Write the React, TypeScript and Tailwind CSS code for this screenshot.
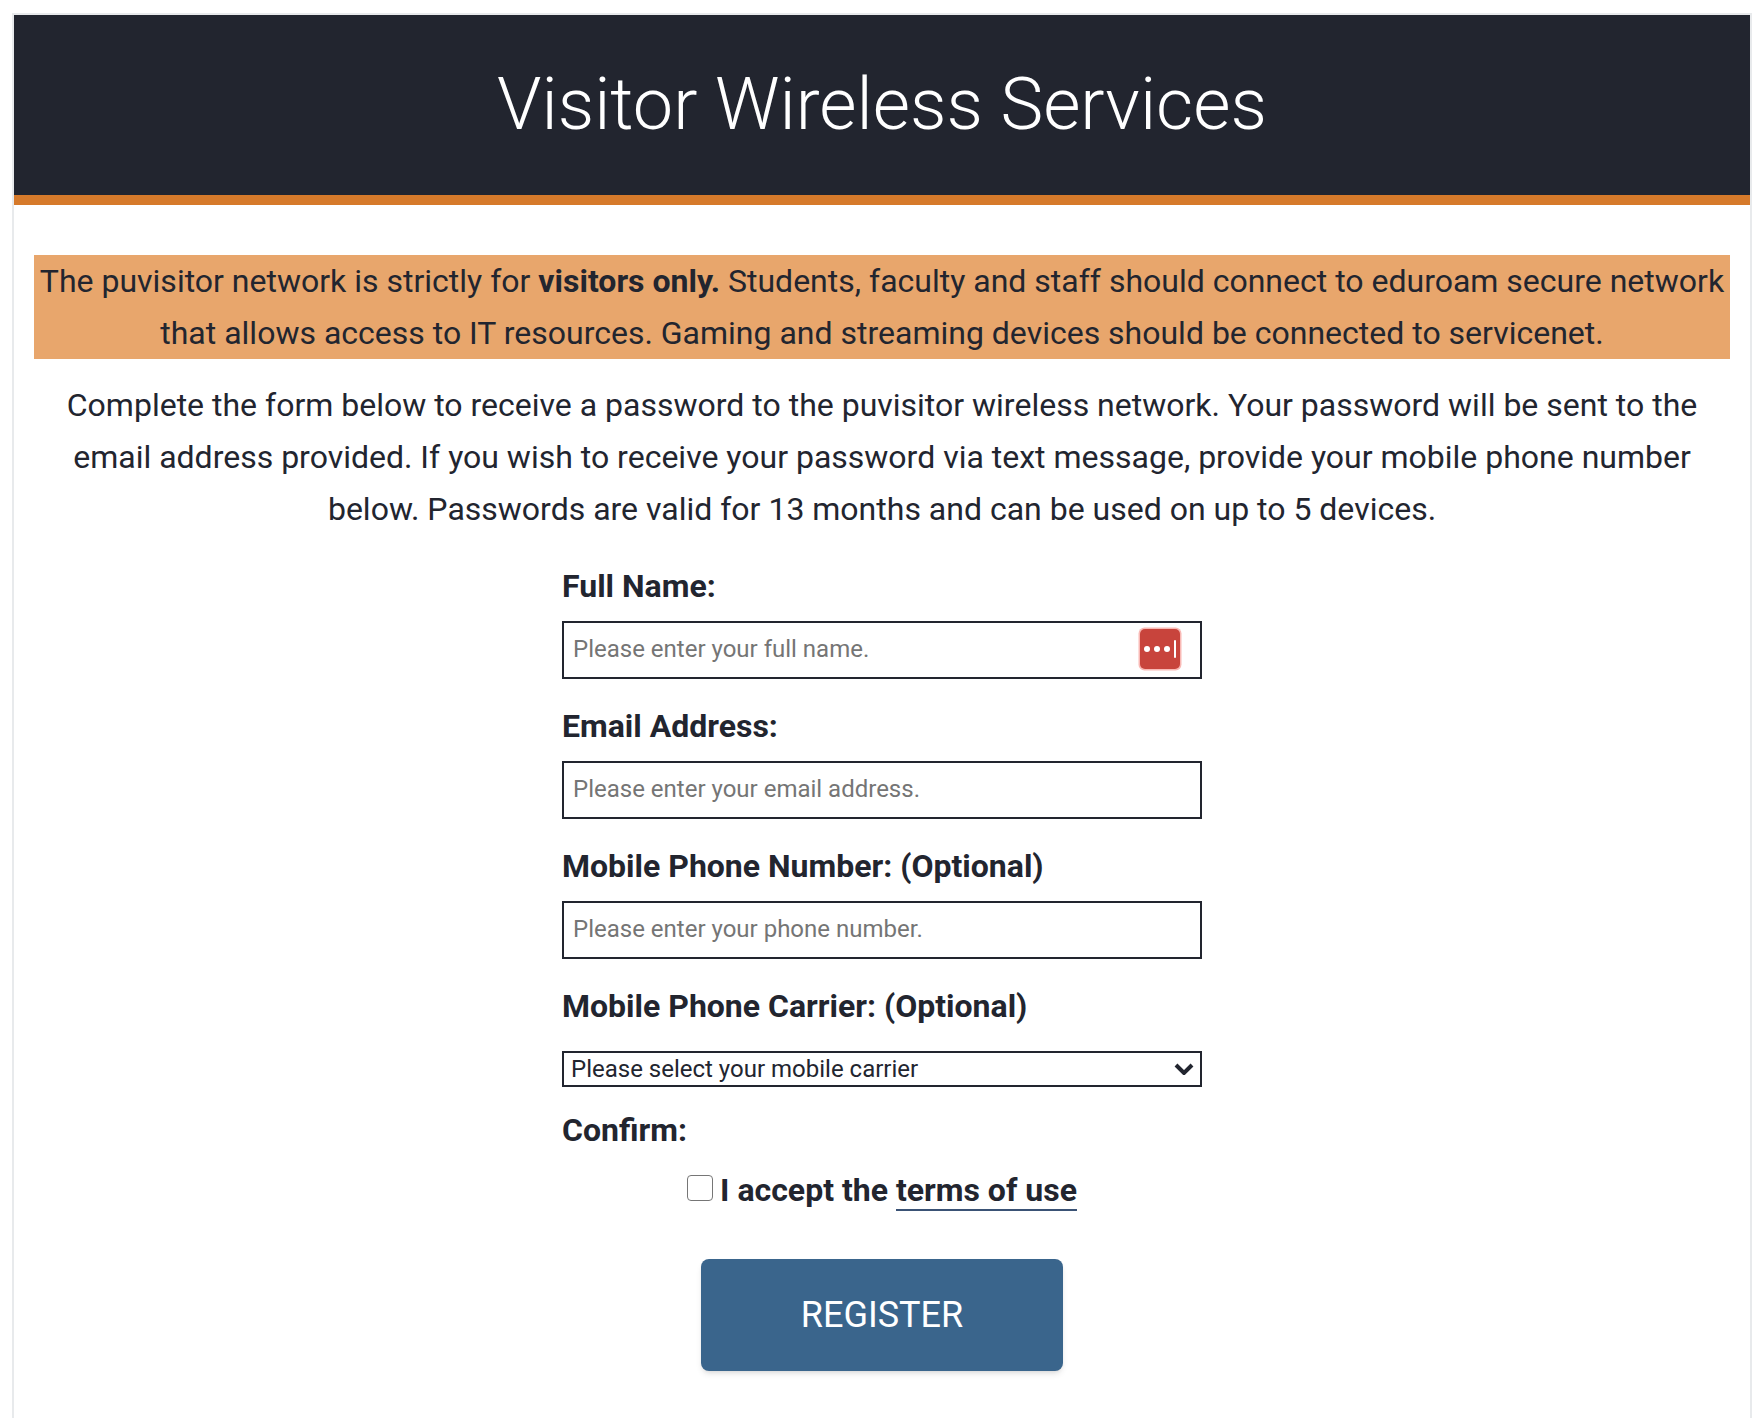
import { useState } from "react";
import type { InputHTMLAttributes, ReactNode } from "react";

const CARRIERS = ["AT&T", "Sprint", "T-Mobile", "Verizon"];

function Label({ htmlFor, children }: { htmlFor: string; children: ReactNode }) {
  return (
    <label htmlFor={htmlFor} className="block text-[32px] leading-[52px] font-bold">
      {children}
    </label>
  );
}

function TextField({
  id,
  label,
  icon,
  ...props
}: { id: string; label: string; icon?: ReactNode } & InputHTMLAttributes<HTMLInputElement>) {
  return (
    <div>
      <Label htmlFor={id}>{label}</Label>
      <div className="relative mt-[9px]">
        <input
          id={id}
          className="block h-[58px] w-full border-2 border-[#22252f] bg-white px-[9px] pb-[2px] text-2xl outline-none placeholder:text-[#757575] focus:border-[#3a658c]"
          {...props}
        />
        {icon}
      </div>
    </div>
  );
}

/** Password manager badge that sits inside the field. */
function FillBadge() {
  return (
    <button
      type="button"
      aria-label="Fill from password manager"
      className="absolute inset-y-0 right-5 flex cursor-pointer items-center pb-[2px]"
    >
      <svg width="44" height="44" viewBox="0 0 44 44" aria-hidden="true">
        <rect x="0.5" y="0.5" width="43" height="43" rx="6" fill="#f9b9b5" />
        <rect x="2" y="2" width="40" height="40" rx="5" fill="#c8443c" />
        <circle cx="9" cy="22" r="3" fill="#fff" />
        <circle cx="19" cy="22" r="3" fill="#fff" />
        <circle cx="29" cy="22" r="3" fill="#fff" />
        <rect x="36" y="13" width="2" height="18" rx="1" fill="#fff" />
      </svg>
    </button>
  );
}

export default function App() {
  const [accepted, setAccepted] = useState(false);

  return (
    <div className="min-h-screen bg-white pt-[13px] pr-1 pl-3 font-[Roboto,sans-serif] text-[#22252f]">
      <main className="min-h-[1405px] border-2 border-b-0 border-[#e8eaec]">
        <header className="border-b-[10px] border-[#d67a2b] bg-[#22252f] py-[45px] text-center">
          <h1 className="text-[72px] leading-[90px] font-light text-white">
            Visitor Wireless Services
          </h1>
        </header>

        <div className="px-5 pt-[50px] pb-12 text-center text-[32px] leading-[52px]">
          <p className="bg-[#e8a66c]">
            The puvisitor network is strictly for <strong>visitors only.</strong> Students, faculty
            and staff should connect to eduroam secure network that allows access to IT resources.
            Gaming and streaming devices should be connected to servicenet.
          </p>
          <p className="mt-5">
            Complete the form below to receive a password to the puvisitor wireless network. Your
            password will be sent to the email address provided. If you wish to receive your
            password via text message, provide your mobile phone number below. Passwords are valid
            for 13 months and can be used on up to 5 devices.
          </p>

          <form
            className="mx-auto mt-[25px] max-w-[640px] text-left"
            onSubmit={(e) => e.preventDefault()}
          >
            <div className="flex flex-col gap-[21px]">
              <TextField
                id="name"
                label="Full Name:"
                placeholder="Please enter your full name."
                icon={<FillBadge />}
              />
              <TextField
                id="email"
                type="email"
                label="Email Address:"
                placeholder="Please enter your email address."
              />
              <TextField
                id="phone"
                type="tel"
                label="Mobile Phone Number: (Optional)"
                placeholder="Please enter your phone number."
              />
              <div>
                <Label htmlFor="carrier">Mobile Phone Carrier: (Optional)</Label>
                <div className="relative mt-[19px]">
                  <select
                    id="carrier"
                    defaultValue=""
                    className="block h-9 w-full appearance-none border-2 border-[#22252f] bg-white px-[7px] text-2xl leading-8"
                  >
                    <option value="">Please select your mobile carrier</option>
                    {CARRIERS.map((c) => (
                      <option key={c}>{c}</option>
                    ))}
                  </select>
                  <svg
                    width="20"
                    height="12"
                    viewBox="0 0 20 12"
                    className="pointer-events-none absolute top-3 right-2"
                    aria-hidden="true"
                  >
                    <path d="M2 2l8 8 8-8" fill="none" stroke="#22252f" strokeWidth="4" />
                  </svg>
                </div>
              </div>
            </div>

            <fieldset className="mt-[17px]">
              <legend className="font-bold">Confirm:</legend>
              <div className="mt-2 flex items-center justify-center gap-[7px] font-bold">
                <input
                  id="accept"
                  type="checkbox"
                  checked={accepted}
                  onChange={(e) => setAccepted(e.target.checked)}
                  className="mb-1 size-[26px] appearance-none rounded-[4px] border border-[#767676] checked:bg-[#3a658c]"
                />
                <div className="leading-[52px]">
                  <label htmlFor="accept">I accept the </label>
                  <a href="#terms" className="border-b-2 border-[#3a5275]">
                    terms of use
                  </a>
                </div>
              </div>
            </fieldset>

            <button
              type="submit"
              className="mx-auto mt-[43px] block cursor-pointer rounded-lg bg-[#3a658c] px-[100px] py-[30px] text-4xl leading-[52px] text-white shadow-md"
            >
              REGISTER
            </button>
          </form>
        </div>
      </main>
    </div>
  );
}
